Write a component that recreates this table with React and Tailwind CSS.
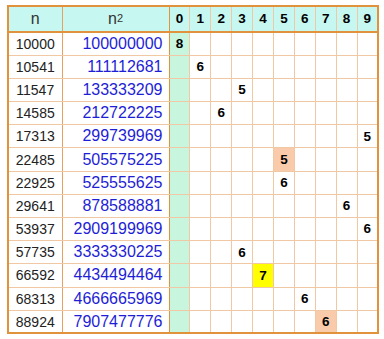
import React from 'react';

const rows = [
  { n: '10000', sq: '100000000', col: 0, val: 8 },
  { n: '10541', sq: '111112681', col: 1, val: 6 },
  { n: '11547', sq: '133333209', col: 3, val: 5 },
  { n: '14585', sq: '212722225', col: 2, val: 6 },
  { n: '17313', sq: '299739969', col: 9, val: 5 },
  { n: '22485', sq: '505575225', col: 5, val: 5, hl: 'peach' },
  { n: '22925', sq: '525555625', col: 5, val: 6 },
  { n: '29641', sq: '878588881', col: 8, val: 6 },
  { n: '53937', sq: '2909199969', col: 9, val: 6 },
  { n: '57735', sq: '3333330225', col: 3, val: 6 },
  { n: '66592', sq: '4434494464', col: 4, val: 7, hl: 'yellow' },
  { n: '68313', sq: '4666665969', col: 6, val: 6 },
  { n: '88924', sq: '7907477776', col: 7, val: 6, hl: 'peach' },
];

const digits = [0, 1, 2, 3, 4, 5, 6, 7, 8, 9];

const cellBg = (row, d) => {
  if (row.col === d && row.hl === 'peach') return 'bg-[#f9cbab]';
  if (row.col === d && row.hl === 'yellow') return 'bg-[#ffff00]';
  if (d === 0) return 'bg-[#c8f5de]';
  return 'bg-white';
};

export default function App() {
  return (
    <div className="w-[384px] h-[339px] bg-white pt-[5px] pl-[7px] font-['Liberation_Sans',Arial,sans-serif]">
      <table className="table-fixed border-collapse border-2 border-[#e0923c] w-[370px]">
        <colgroup>
          <col className="w-[54px]" />
          <col className="w-[107px]" />
          {digits.map((d) => (
            <col key={d} className="w-[20.9px]" />
          ))}
        </colgroup>
        <thead>
          <tr className="h-[25px] bg-[#c6f7f0]">
            <th className="border-r border-[#e6a060] border-b-2 border-b-[#e0923c] font-normal text-[16px] text-[#333] text-center">n</th>
            <th className="border-r border-[#e0923c] border-b-2 border-b-[#e0923c] font-normal text-[16px] text-[#333] text-center">
              n<sup className="text-[11px] relative -top-[2px]">2</sup>
            </th>
            {digits.map((d) => (
              <th
                key={d}
                className="border-r border-[#f0c8a4] border-b-2 border-b-[#e0923c] font-bold text-[13.5px] text-black text-center"
              >
                {d}
              </th>
            ))}
          </tr>
        </thead>
        <tbody>
          {rows.map((row) => (
            <tr key={row.n} className="h-[23.2px]">
              <td className="border-r border-[#e6a060] border-b border-b-[#f0c8a4] text-center text-[14px] text-[#222] leading-none">
                {row.n}
              </td>
              <td className="border-r border-[#e0923c] border-b border-b-[#f0c8a4] text-right pr-[6px] text-[16px] text-[#1e1ed6] leading-none">
                {row.sq}
              </td>
              {digits.map((d) => (
                <td
                  key={d}
                  className={`border-r border-b border-[#f0c8a4] text-center font-bold text-[13.5px] text-black leading-none ${cellBg(row, d)}`}
                >
                  {row.col === d ? row.val : ''}
                </td>
              ))}
            </tr>
          ))}
        </tbody>
      </table>
    </div>
  );
}
